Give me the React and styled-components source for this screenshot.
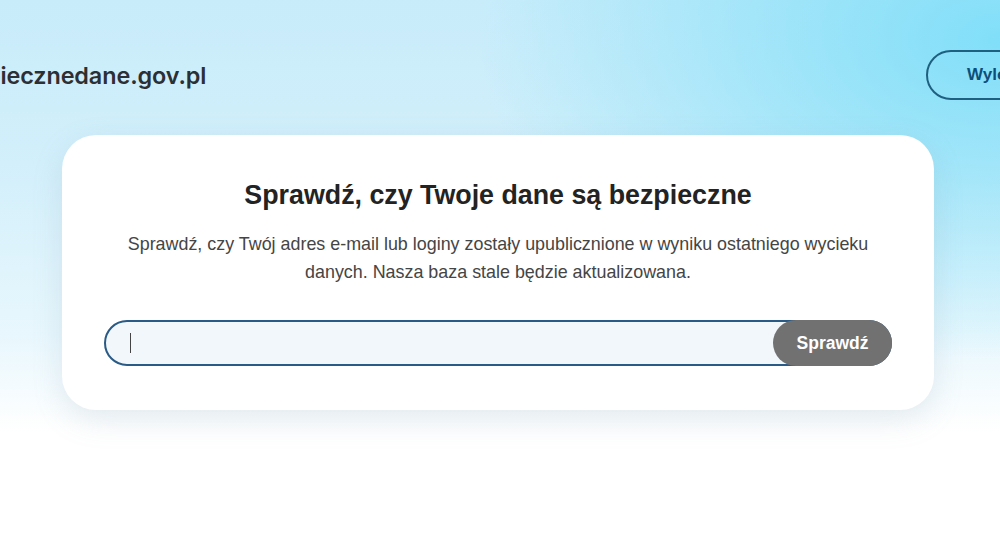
import React from 'react'
import styled, { createGlobalStyle } from 'styled-components'

const GlobalStyle = createGlobalStyle`
  html, body {
    margin: 0;
    padding: 0;
    width: 1000px;
    height: 540px;
    overflow: hidden;
  }
  body {
    font-family: "Liberation Sans", Arial, sans-serif;
    background: #fff;
  }
  * { box-sizing: border-box; }
`

const Page = styled.div`
  width: 1000px;
  height: 540px;
  overflow: hidden;
  background:
    radial-gradient(ellipse 520px 320px at 1000px 40px, rgba(125, 222, 248, 0.95), rgba(125, 222, 248, 0) 100%),
    linear-gradient(180deg, #c8ecfa 0%, #d2effb 30%, #e8f7fd 62%, #ffffff 80%, #ffffff 100%);
`

const Header = styled.header`
  display: flex;
  align-items: center;
  justify-content: space-between;
  height: 135px;
  padding-top: 15px;
  margin-left: -55px;
  margin-right: -80px;
`

const Logo = styled.div`
  font-family: Inter, "Noto Sans", sans-serif;
  font-weight: 600;
  font-size: 23.4px;
  color: #2c2f33;
  letter-spacing: -0.1px;
`

const LogoutButton = styled.button`
  height: 50px;
  width: 154px;
  border: 2px solid #1f5f7f;
  border-radius: 25px;
  background: transparent;
  color: #0d4f7a;
  font-family: "Liberation Sans", Arial, sans-serif;
  font-weight: 700;
  font-size: 17px;
  text-align: left;
  padding-left: 39px;
`

const Main = styled.main`
  display: flex;
  justify-content: center;
  padding-right: 4px;
`

const Card = styled.section`
  width: 872px;
  height: 275px;
  background: #fff;
  border-radius: 34px;
  box-shadow: 0 10px 30px rgba(120, 150, 170, 0.18);
  display: flex;
  flex-direction: column;
  align-items: center;
  padding: 42px 30px 0;
`

const Title = styled.h1`
  margin: 0;
  font-size: 26.8px;
  font-weight: 700;
  color: #232323;
  line-height: 36px;
`

const Lead = styled.p`
  margin: 17px 0 0;
  font-size: 17.9px;
  line-height: 28px;
  color: #454545;
  text-align: center;
  max-width: 760px;
`

const SearchForm = styled.form`
  margin-top: 34px;
  width: 788px;
  height: 46px;
  display: flex;
  position: relative;
  border-radius: 23px;
  border: 2px solid #2a5a86;
  background: #f1f7fa;
`

const SearchInput = styled.input`
  flex: 1;
  border: none;
  background: transparent;
  outline: none;
  padding-left: 24px;
  font-size: 15px;
  font-family: "Liberation Sans", Arial, sans-serif;
`

const Caret = styled.span`
  position: absolute;
  left: 24px;
  top: 11px;
  width: 1px;
  height: 20px;
  background: #444;
`

const SubmitButton = styled.button`
  width: 119px;
  margin: -2px -2px -2px 0;
  border: none;
  border-radius: 23px;
  background: #717171;
  color: #fff;
  font-family: "Liberation Sans", Arial, sans-serif;
  font-weight: 700;
  font-size: 17.5px;
`

export default function App() {
  return (
    <Page>
      <GlobalStyle />
      <Header>
        <Logo>bezpiecznedane.gov.pl</Logo>
        <LogoutButton type="button">Wyloguj</LogoutButton>
      </Header>
      <Main>
        <Card>
          <Title>Sprawdź, czy Twoje dane są bezpieczne</Title>
          <Lead>
            Sprawdź, czy Twój adres e-mail lub loginy zostały upublicznione w wyniku ostatniego wycieku
            danych. Nasza baza stale będzie aktualizowana.
          </Lead>
          <SearchForm onSubmit={(e) => e.preventDefault()}>
            <Caret />
            <SearchInput type="text" aria-label="E-mail lub login" />
            <SubmitButton type="submit">Sprawdź</SubmitButton>
          </SearchForm>
        </Card>
      </Main>
    </Page>
  )
}
